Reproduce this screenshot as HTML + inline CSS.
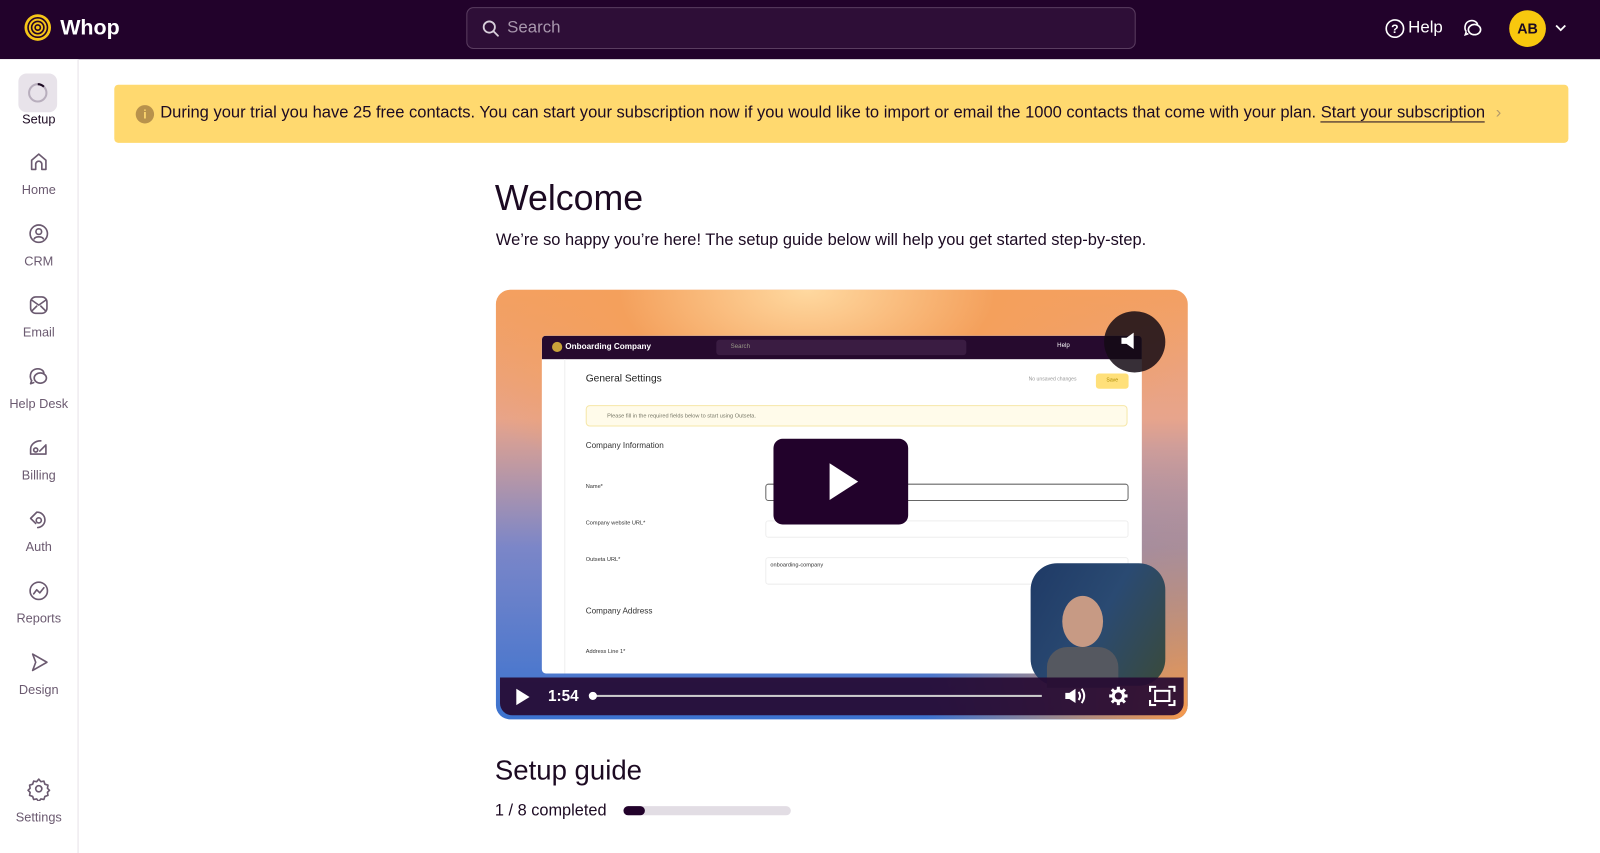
<!DOCTYPE html>
<html><head><meta charset="utf-8"><style>
*{box-sizing:border-box;margin:0;padding:0}
html,body{width:1600px;height:836px;overflow:hidden;background:#fff}
body{font-family:"Liberation Sans",sans-serif;color:#1c0a22}
#w{position:absolute;left:0;top:0;width:1568px;height:820px;transform:scale(1.02041);transform-origin:0 0}
.top{position:absolute;left:0;top:0;width:1568px;height:58px;background:#22022b}
.abs{position:absolute}
.side{position:absolute;left:0;top:58px;width:77px;height:778px;border-right:1px solid #e6e2e8;background:#fff}
.nav{position:absolute;left:0;width:76px;text-align:center;font-size:12.5px;color:#6b5a70}
.nav svg{display:block;margin:0 auto 9px}
.ico{stroke:#6b5a70;fill:none;stroke-width:1.6;stroke-linecap:round;stroke-linejoin:round}
</style></head><body><div id="w">
<div class="top">
 <svg class="abs" style="left:23px;top:13px" width="28" height="28" viewBox="0 0 28 28"><circle cx="14" cy="14" r="13" fill="#f5c518"/><circle cx="14" cy="14" r="9.5" fill="none" stroke="#22022b" stroke-width="1.6"/><circle cx="14" cy="14" r="6" fill="none" stroke="#22022b" stroke-width="1.6"/><circle cx="14" cy="14" r="2.6" fill="none" stroke="#22022b" stroke-width="1.6"/></svg>
 <div class="abs" style="left:59px;top:16px;color:#fff;font-size:21px;font-weight:bold">Whop</div>
 <div class="abs" style="left:457px;top:7px;width:656px;height:41px;border:1px solid #5a3d60;border-radius:7px;background:#2e0e37"></div>
 <svg class="abs" style="left:472px;top:19px" width="18" height="18" viewBox="0 0 18 18"><circle cx="7.5" cy="7.5" r="5.5" fill="none" stroke="#d8cfdb" stroke-width="1.8"/><path d="M11.5 11.5L16 16" stroke="#d8cfdb" stroke-width="1.8" stroke-linecap="round"/></svg>
 <div class="abs" style="left:497px;top:18px;color:#a897ad;font-size:16.5px">Search</div>
 <svg class="abs" style="left:1357px;top:18px" width="20" height="20" viewBox="0 0 20 20"><circle cx="10" cy="10" r="8.5" fill="none" stroke="#fff" stroke-width="1.6"/><text x="10" y="14.5" text-anchor="middle" fill="#fff" font-size="12" font-family="Liberation Sans" font-weight="bold">?</text></svg>
 <div class="abs" style="left:1380px;top:18px;color:#fff;font-size:16.5px">Help</div>
 <svg class="abs" style="left:1433px;top:17px" width="21" height="21" viewBox="0 0 21 21"><path d="M4 14C2 12 2 6 6 4c4-2 9 0 9 4" fill="none" stroke="#fff" stroke-width="1.6"/><ellipse cx="12" cy="12" rx="6" ry="5" fill="none" stroke="#fff" stroke-width="1.6"/><path d="M4 14l-1 3 3-1" fill="none" stroke="#fff" stroke-width="1.6"/></svg>
 <div class="abs" style="left:1479px;top:10px;width:36px;height:36px;border-radius:50%;background:#f8c80e;color:#1c0a22;font-weight:bold;font-size:14px;text-align:center;line-height:36px">AB</div>
 <svg class="abs" style="left:1523px;top:22px" width="13" height="10" viewBox="0 0 13 10"><path d="M2 3l4.5 4.5L11 3" fill="none" stroke="#fff" stroke-width="1.8"/></svg>
</div>
<div class="side">
 <div class="abs" style="left:18px;top:14px;width:38px;height:38px;border-radius:8px;background:#e8e3ea"></div>
 <svg class="abs" style="left:26px;top:22px" width="22" height="22" viewBox="0 0 22 22"><circle cx="11" cy="11" r="8.5" fill="none" stroke="#b8aebd" stroke-width="2"/><path d="M11 2.5a8.5 8.5 0 0 1 6 2.5" fill="none" stroke="#1c0a22" stroke-width="2"/></svg>
 <div class="nav" style="top:52px;color:#1c0a22">Setup</div>
 <div class="nav" style="top:90px"><svg width="22" height="22" viewBox="0 0 22 22" class="ico"><path d="M4 18V9l7-6 7 6v9h-4v-5a3 3 0 0 0-6 0v5z"/></svg>Home</div>
 <div class="nav" style="top:160px"><svg width="22" height="22" viewBox="0 0 22 22" class="ico"><circle cx="11" cy="11" r="8.5"/><circle cx="11" cy="9" r="2.8"/><path d="M6.5 16c1.5-2.5 7.5-2.5 9 0"/></svg>CRM</div>
 <div class="nav" style="top:230px"><svg width="22" height="22" viewBox="0 0 22 22" class="ico"><rect x="3" y="3" width="16" height="16" rx="5"/><path d="M4 6l7 5 7-5M4 17l5-5M18 17l-5-5"/></svg>Email</div>
 <div class="nav" style="top:300px"><svg width="22" height="22" viewBox="0 0 22 22" class="ico"><path d="M4 15C2 12 2 6 7 4c4-1.5 9 0 9 4"/><ellipse cx="12.5" cy="12.5" rx="6" ry="5"/><path d="M4 15l-1 3 3-1"/></svg>Help Desk</div>
 <div class="nav" style="top:370px"><svg width="22" height="22" viewBox="0 0 22 22" class="ico"><path d="M3 12c0-4 4-8 10-8M3 12v5h15v-8"/><circle cx="8" cy="13" r="2"/><path d="M12 14l6-6"/></svg>Billing</div>
 <div class="nav" style="top:440px"><svg width="22" height="22" viewBox="0 0 22 22" class="ico"><path d="M9 4a7 7 0 1 1 1 15M9 4L3 10l5 5"/><circle cx="11" cy="12" r="2.5"/></svg>Auth</div>
 <div class="nav" style="top:510px"><svg width="22" height="22" viewBox="0 0 22 22" class="ico"><circle cx="11" cy="11" r="8.5"/><path d="M6 14l3-4 3 3 4-5"/></svg>Reports</div>
 <div class="nav" style="top:580px"><svg width="22" height="22" viewBox="0 0 22 22" class="ico"><path d="M5 3l14 8-14 8 3-8z"/></svg>Design</div>
 <div class="nav" style="top:703px"><svg width="24" height="24" viewBox="0 0 24 24" class="ico"><circle cx="12" cy="12" r="3"/><path d="M12 2.5l2 2.5 3-.5 1 3 3 1-.5 3 2 2-2 2 .5 3-3 1-1 3-3-.5-2 2.5-2-2.5-3 .5-1-3-3-1 .5-3-2-2 2-2-.5-3 3-1 1-3 3 .5z"/></svg>Settings</div>
</div>
<div class="abs" style="left:112px;top:83px;width:1425px;height:57px;background:#ffd96f;border-radius:4px"></div>
<div class="abs" style="left:133px;top:103px;width:18px;height:18px;border-radius:50%;background:#b8924c;color:#ffd96f;font-size:12px;font-weight:bold;text-align:center;line-height:18px">i</div>
<div class="abs" style="left:157px;top:101px;font-size:16.2px;color:#1c0a22;white-space:nowrap">During your trial you have 25 free contacts. You can start your subscription now if you would like to import or email the 1000 contacts that come with your plan. <span style="border-bottom:1px solid #1c0a22">Start your subscription</span> <span style="color:#b39a6a;margin-left:6px">›</span></div>
<div class="abs" style="left:485px;top:175px;font-size:35px;color:#1c0a22">Welcome</div>
<div class="abs" style="left:486px;top:226px;font-size:16.1px">We’re so happy you’re here! The setup guide below will help you get started step-by-step.</div>
<div class="abs" style="left:486px;top:284px;width:678px;height:421px;border-radius:14px;overflow:hidden;background:linear-gradient(180deg,#f3a063 0%,#e7a48c 30%,#7b86c8 60%,#3c73cf 100%)">
 <div class="abs" style="left:0;top:0;width:678px;height:200px;background:radial-gradient(ellipse at 45% 0%,#ffd9a0 0%,#f4a05c 35%,rgba(200,120,160,0) 75%)"></div>
 <div class="abs" style="left:420px;top:150px;width:258px;height:271px;background:radial-gradient(ellipse at 100% 100%,#f79a4c 0%,rgba(240,150,90,0) 70%)"></div>
 <div class="abs" style="left:45px;top:45px;width:588px;height:331px;background:#fff;border-radius:4px;overflow:hidden">
  <div style="height:23px;background:#260a2e;position:relative">
   <div class="abs" style="left:10px;top:6px;width:10px;height:10px;border-radius:50%;background:#c9a33a"></div>
   <div class="abs" style="left:23px;top:6px;color:#fff;font-size:8px;font-weight:bold">Onboarding Company</div>
   <div class="abs" style="left:171px;top:4px;width:245px;height:15px;background:#3a1c42;border-radius:3px;color:#998;font-size:6px;padding:4px 0 0 14px">Search</div>
   <div class="abs" style="left:505px;top:7px;color:#fff;font-size:6px">Help</div>
  </div>
  <div class="abs" style="left:0;top:23px;width:23px;height:308px;border-right:1px solid #eee"></div>
  <div class="abs" style="left:43px;top:37px;font-size:10px;color:#222">General Settings</div>
  <div class="abs" style="left:477px;top:40px;font-size:5px;color:#999">No unsaved changes</div>
  <div class="abs" style="left:543px;top:37px;width:32px;height:15px;background:#ffe07a;border-radius:3px;font-size:5px;color:#a80;text-align:center;line-height:15px">Save</div>
  <div class="abs" style="left:43px;top:68px;width:531px;height:21px;border:1px solid #f6e7a8;background:#fffbea;border-radius:4px;font-size:5.5px;color:#776;padding:7px 0 0 20px">Please fill in the required fields below to start using Outseta.</div>
  <div class="abs" style="left:43px;top:103px;font-size:8px;color:#333">Company Information</div>
  <div class="abs" style="left:43px;top:145px;font-size:5.5px;color:#333">Name*</div>
  <div class="abs" style="left:219px;top:145px;width:356px;height:17px;border:1.5px solid #666;border-radius:3px"></div>
  <div class="abs" style="left:43px;top:181px;font-size:5.5px;color:#333">Company website URL*</div>
  <div class="abs" style="left:219px;top:181px;width:356px;height:17px;border:1px solid #eee;border-radius:3px"></div>
  <div class="abs" style="left:43px;top:217px;font-size:5.5px;color:#333">Outseta URL*</div>
  <div class="abs" style="left:219px;top:217px;width:356px;height:27px;border:1px solid #eee;border-radius:3px;font-size:5.5px;padding:4px;color:#333">onboarding-company</div>
  <div class="abs" style="left:43px;top:265px;font-size:8px;color:#333">Company Address</div>
  <div class="abs" style="left:43px;top:307px;font-size:5.5px;color:#333">Address Line 1*</div>
 </div>
 <div class="abs" style="left:272px;top:146px;width:132px;height:84px;background:#22022b;border-radius:9px"></div>
 <svg class="abs" style="left:325px;top:168px" width="32" height="40" viewBox="0 0 32 40"><path d="M2 2l28 18L2 38z" fill="#fff"/></svg>
 <div class="abs" style="left:596px;top:21px;width:60px;height:60px;border-radius:50%;background:rgba(20,10,20,.85)"></div>
 <svg class="abs" style="left:611px;top:40px" width="20" height="20" viewBox="0 0 20 20"><path d="M2 7h5l7-5v16l-7-5H2z" fill="#fff"/></svg>
 <div class="abs" style="left:524px;top:268px;width:132px;height:120px;border-radius:26px;background:linear-gradient(120deg,#1f3a66,#2a4a72 50%,#3a4a3a)"></div>
 <div class="abs" style="left:555px;top:300px;width:40px;height:50px;border-radius:50%;background:#c79a84"></div>
 <div class="abs" style="left:540px;top:350px;width:70px;height:40px;border-radius:20px 20px 0 0;background:#555860"></div>
 <div class="abs" style="left:4px;top:380px;width:670px;height:37px;background:rgba(38,10,50,.92);border-radius:0 0 12px 12px"></div>
 <svg class="abs" style="left:18px;top:390px" width="16" height="18" viewBox="0 0 16 18"><path d="M2 1l13 8-13 8z" fill="#fff"/></svg>
 <div class="abs" style="left:51px;top:390px;color:#fff;font-size:15px;font-weight:bold">1:54</div>
 <div class="abs" style="left:95px;top:397px;width:440px;height:2px;background:#ccc"></div>
 <div class="abs" style="left:91px;top:394px;width:8px;height:8px;border-radius:50%;background:#fff"></div>
 <svg class="abs" style="left:556px;top:388px" width="24" height="20" viewBox="0 0 24 20"><path d="M2 7h4l6-4v14l-6-4H2z" fill="#fff"/><path d="M15 6q3 4 0 8M18 3q5 7 0 14" fill="none" stroke="#fff" stroke-width="2"/></svg>
 <svg class="abs" style="left:600px;top:388px" width="20" height="20" viewBox="0 0 20 20"><circle cx="10" cy="10" r="5" fill="none" stroke="#fff" stroke-width="3"/><path d="M10 1v4M10 15v4M1 10h4M15 10h4M3.6 3.6l2.8 2.8M13.6 13.6l2.8 2.8M3.6 16.4l2.8-2.8M13.6 6.4l2.8-2.8" stroke="#fff" stroke-width="3"/></svg>
 <svg class="abs" style="left:640px;top:388px" width="26" height="20" viewBox="0 0 26 20"><path d="M1 6V1h6M19 1h6v5M25 14v5h-6M7 19H1v-5" fill="none" stroke="#fff" stroke-width="2.2"/><rect x="6" y="5" width="14" height="10" fill="none" stroke="#fff" stroke-width="2"/></svg>
</div>
<div class="abs" style="left:485px;top:740px;font-size:27px;color:#1c0a22">Setup guide</div>
<div class="abs" style="left:485px;top:786px;font-size:16px">1 / 8 completed</div>
<div class="abs" style="left:611px;top:790px;width:164px;height:9px;border-radius:5px;background:#e2dde4"></div>
<div class="abs" style="left:611px;top:790px;width:21px;height:9px;border-radius:5px;background:#22022b"></div>
</div></body></html>
